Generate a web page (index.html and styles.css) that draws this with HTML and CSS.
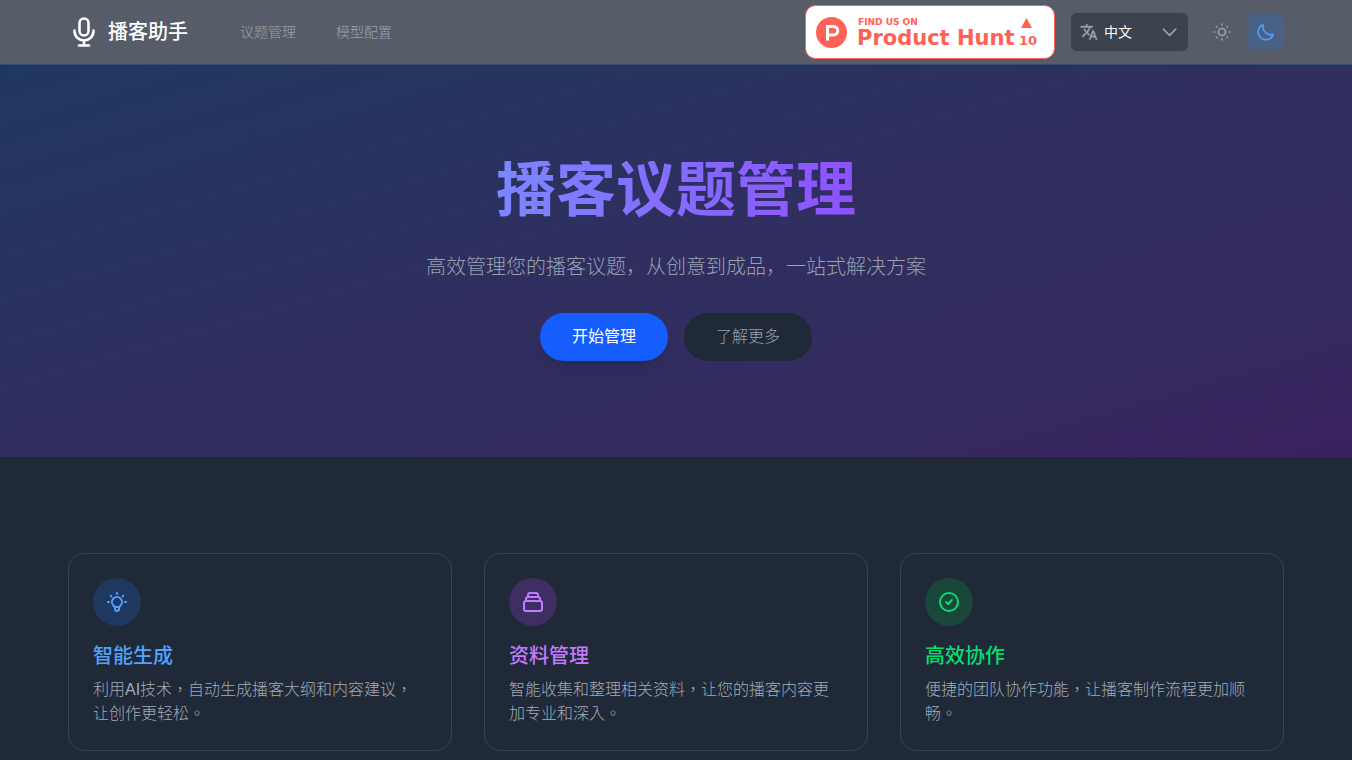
FILE: index.html
```html
<!DOCTYPE html>
<html lang="zh-CN">
<head>
<meta charset="utf-8">
<meta name="viewport" content="width=device-width, initial-scale=1">
<title>播客助手</title>
<link rel="stylesheet" href="styles.css">
</head>
<body>
<header class="header">
  <div class="container header-inner">
    <a class="brand" href="#">
      <svg class="brand-icon" viewBox="0 0 32 32" fill="none" stroke="currentColor" stroke-width="2.6" stroke-linecap="round" aria-hidden="true">
        <rect x="11.5" y="2.5" width="9" height="17" rx="4.5"/>
        <path d="M6.5 14.500v.8a9.500 9.200 0 0 0 19 0v-.8M16 24.500v5M11 29.500h10"/>
      </svg>
      <span>播客助手</span>
    </a>
    <nav class="nav">
      <a href="#">议题管理</a>
      <a href="#">模型配置</a>
    </nav>
    <div class="actions">
      <a class="hunt" href="#" aria-label="Product Hunt">
        <svg width="250" height="54" viewBox="0 0 250 54" aria-hidden="true">
          <rect class="hunt-box" x="0.5" y="0.5" width="249" height="53" rx="10"/>
          <circle class="hunt-fill" cx="26.500" cy="27.500" r="15.500"/>
          <path class="hunt-p" d="M22.500 35.500V21.500h6a4.200 4.200 0 0 1 0 8.500h-6"/>
          <text class="hunt-fill hunt-small" x="53" y="20">FIND US ON</text>
          <text class="hunt-fill hunt-big" x="52" y="40">Product Hunt</text>
          <path class="hunt-fill" d="M216 23l5.500-10 5.500 10z"/>
          <text class="hunt-fill hunt-count" x="223" y="40" text-anchor="middle">10</text>
        </svg>
      </a>
      <div class="lang">
        <svg class="lang-icon" viewBox="0 0 24 24" fill="currentColor" stroke="currentColor" stroke-width="0.5" aria-hidden="true">
          <path d="M12.870 15.070l-2.540-2.510.03-.03A17.520 17.520 0 0 0 14.070 6H17V4h-7V2H8v2H1v2h11.170C11.500 7.920 10.440 9.750 9 11.350 8.070 10.320 7.300 9.190 6.690 8h-2c.73 1.630 1.730 3.170 2.980 4.560l-5.090 5.020L4 19l5-5 3.110 3.110.76-2.040zM18.500 10h-2L12 22h2l1.120-3h4.750L21 22h2l-4.500-12zm-2.620 7l1.620-4.330L19.120 17h-3.240z"/>
        </svg>
        <select class="lang-select" aria-label="语言">
          <option>中文</option>
          <option>English</option>
        </select>
        <svg class="lang-arrow" viewBox="0 0 16 16" fill="none" stroke="currentColor" stroke-width="1.500" stroke-linecap="round" stroke-linejoin="round" aria-hidden="true"><path d="M3 5.500l5.500 5.500 5.500-5.500"/></svg>
      </div>
      <div class="themes">
        <button class="theme" type="button" aria-label="浅色">
          <svg viewBox="0 0 20 20" fill="none" stroke="currentColor" stroke-width="1.700" stroke-linecap="round" aria-hidden="true">
            <circle cx="10" cy="10" r="3.500"/>
            <path d="M10 2.200v.6M10 17.200v.6M2.200 10h.6M17.200 10h.6M4.600 4.600l.3.300M15.100 15.100l.3.300M15.400 4.600l-.3.300M4.900 15.100l-.3.300"/>
          </svg>
        </button>
        <button class="theme theme-active" type="button" aria-label="深色" aria-pressed="true">
          <svg viewBox="0 0 20 20" fill="none" stroke="currentColor" stroke-width="1.600" stroke-linejoin="round" aria-hidden="true">
            <path d="M17.300 12.600A7.800 7.800 0 1 1 7 2.700a8.400 8.400 0 0 0 10.300 9.900z"/>
          </svg>
        </button>
      </div>
    </div>
  </div>
</header>
<main>
  <section class="hero">
    <h1 class="hero-title">播客议题管理</h1>
    <p class="hero-text">高效管理您的播客议题，从创意到成品，一站式解决方案</p>
    <div class="hero-actions">
      <button class="button button-primary" type="button">开始管理</button>
      <button class="button button-dark" type="button">了解更多</button>
    </div>
  </section>
  <section class="features">
    <div class="container cards">
      <article class="card card-blue">
        <div class="card-icon">
          <svg viewBox="0 0 24 24" fill="none" stroke="currentColor" stroke-width="2" stroke-linecap="round" stroke-linejoin="round" aria-hidden="true"><path d="M9.663 17h4.673M12 3v1m6.364 1.636l-.707.707M21 12h-1M4 12H3m3.343-5.657l-.707-.707m2.828 9.900a5 5 0 1 1 7.072 0l-.548.547A3.374 3.374 0 0 0 14 18.469V19a2 2 0 1 1-4 0v-.531c0-.895-.356-1.754-.988-2.386l-.548-.547z"/></svg>
        </div>
        <h3 class="card-title">智能生成</h3>
        <p class="card-text" lang="zh-TW">利用AI技术，自动生成播客大纲和内容建议，让创作更轻松。</p>
      </article>
      <article class="card card-purple">
        <div class="card-icon">
          <svg viewBox="0 0 24 24" fill="none" stroke="currentColor" stroke-width="2" stroke-linecap="round" stroke-linejoin="round" aria-hidden="true"><path d="M19 11H5m14 0a2 2 0 0 1 2 2v6a2 2 0 0 1-2 2H5a2 2 0 0 1-2-2v-6a2 2 0 0 1 2-2m14 0V9a2 2 0 0 0-2-2M5 11V9a2 2 0 0 1 2-2m0 0V5a2 2 0 0 1 2-2h6a2 2 0 0 1 2 2v2M7 7h10"/></svg>
        </div>
        <h3 class="card-title">资料管理</h3>
        <p class="card-text" lang="zh-TW">智能收集和整理相关资料，让您的播客内容更加专业和深入。</p>
      </article>
      <article class="card card-green">
        <div class="card-icon">
          <svg viewBox="0 0 24 24" fill="none" stroke="currentColor" stroke-width="2" stroke-linecap="round" stroke-linejoin="round" aria-hidden="true"><path d="M9 12l2 2 4-4m6 2a9 9 0 1 1-18 0 9 9 0 0 1 18 0z"/></svg>
        </div>
        <h3 class="card-title">高效协作</h3>
        <p class="card-text" lang="zh-TW">便捷的团队协作功能，让播客制作流程更加顺畅。</p>
      </article>
    </div>
  </section>
</main>
</body>
</html>
```
FILE: styles.css
```css
* {
  box-sizing: border-box;
}

body {
  margin: 0;
  background: #1f2937;
  color: #99a1af;
  font-family: "Liberation Sans", "Noto Sans CJK SC", sans-serif;
  font-size: 16px;
  line-height: 24px;
}

h1, h3, p {
  margin: 0;
}

a {
  color: inherit;
  text-decoration: none;
}

button, select {
  font: inherit;
}

.container {
  width: 100%;
  max-width: 1280px;
  margin: 0 auto;
  padding: 0 32px;
}

.header {
  background: #575d68;
  border-bottom: 1px solid #364a6b;
}

.header-inner {
  display: flex;
  align-items: center;
  height: 64px;
}

.brand {
  display: flex;
  align-items: center;
  gap: 8px;
  color: #fff;
  font-size: 20px;
  font-weight: 500;
  line-height: 28px;
}

.brand-icon {
  width: 32px;
  height: 32px;
}

.nav {
  display: flex;
  gap: 40px;
  margin-left: 52px;
  font-size: 14px;
  font-weight: 300;
  line-height: 20px;
}

.actions {
  display: flex;
  align-items: center;
  gap: 16px;
  margin-left: auto;
}

.hunt svg {
  display: block;
}

.hunt-box {
  fill: #fff;
  stroke: #ff6154;
}

.hunt-fill {
  fill: #ff6154;
}

.hunt-p {
  fill: none;
  stroke: #fff;
  stroke-width: 3;
}

.hunt text {
  font-family: "DejaVu Sans", sans-serif;
  font-weight: 700;
}

.hunt-small {
  font-size: 9px;
}

.hunt-big {
  font-size: 21px;
}

.hunt-count {
  font-size: 13px;
}

.lang {
  display: grid;
  grid-template-columns: 33px 1fr 32px;
  align-items: center;
  width: 117px;
  height: 38px;
  border-radius: 6px;
  background: #3c434f;
}

.lang-icon, .lang-arrow, .lang-select {
  grid-row: 1;
}

.lang-icon {
  grid-column: 1;
  width: 18px;
  height: 18px;
  margin-left: 9px;
  z-index: 1;
  pointer-events: none;
}

.lang-arrow {
  grid-column: 3;
  width: 18px;
  height: 18px;
  margin-left: 4px;
  z-index: 1;
  pointer-events: none;
}

.lang-select {
  grid-column: 1 / -1;
  width: 100%;
  height: 38px;
  padding: 0 32px 0 33px;
  appearance: none;
  border: 0;
  border-radius: 6px;
  background: transparent;
  color: #fff;
  font-size: 14px;
}

.themes {
  display: flex;
  gap: 8px;
}

.theme {
  display: grid;
  place-items: center;
  width: 36px;
  height: 36px;
  padding: 0;
  border: 0;
  border-radius: 6px;
  background: transparent;
  color: #99a1af;
}

.theme svg {
  width: 20px;
  height: 20px;
}

.theme-active {
  background: #4a6186;
  color: #51a2ff;
}

.hero {
  display: flex;
  flex-direction: column;
  align-items: center;
  padding: 96px 32px;
  background: linear-gradient(to bottom right, #1f3760 0%, #2f2f5f 45%, #342b60 80%, #3b215e 100%);
  text-align: center;
}

.hero-title {
  margin-bottom: 32px;
  background: linear-gradient(to right, #7c86ff, #8e51ff);
  background-clip: text;
  -webkit-background-clip: text;
  color: transparent;
  font-size: 60px;
  font-weight: 700;
  line-height: 60px;
}

.hero-text {
  margin-bottom: 32px;
  color: #99a1af;
  font-size: 20px;
  font-weight: 300;
  line-height: 28px;
}

.hero-actions {
  display: flex;
  gap: 16px;
}

.button {
  padding: 12px 32px;
  border: 0;
  border-radius: 24px;
  line-height: 24px;
}

.button-primary {
  background: #155dfc;
  color: #fff;
  box-shadow: 0 10px 15px -3px rgb(0 0 0 / 0.1), 0 4px 6px -4px rgb(0 0 0 / 0.1);
}

.button-dark {
  background: #1f2937;
  color: #99a1af;
  font-weight: 300;
}

.features {
  padding: 96px 0;
  background: #1f2937;
}

.cards {
  display: grid;
  grid-template-columns: repeat(3, 1fr);
  gap: 32px;
}

.card {
  padding: 24px;
  border: 1px solid #364153;
  border-radius: 16px;
}

.card-icon {
  display: grid;
  place-items: center;
  width: 48px;
  height: 48px;
  margin-bottom: 16px;
  border-radius: 50%;
}

.card-icon svg {
  width: 24px;
  height: 24px;
}

.card-title {
  margin-bottom: 8px;
  font-size: 20px;
  font-weight: 500;
  line-height: 28px;
}

.card-text {
  color: #a3abb8;
  font-family: "Liberation Sans", "Noto Sans CJK TC", sans-serif;
  font-weight: 300;
}

.card-blue .card-icon, .card-blue .card-title {
  color: #51a2ff;
}

.card-blue .card-icon {
  background: #1f3860;
}

.card-purple .card-icon, .card-purple .card-title {
  color: #c27aff;
}

.card-purple .card-icon {
  background: #3e2e63;
}

.card-green .card-icon, .card-green .card-title {
  color: #05df72;
}

.card-green .card-icon {
  background: #19473b;
}
```
